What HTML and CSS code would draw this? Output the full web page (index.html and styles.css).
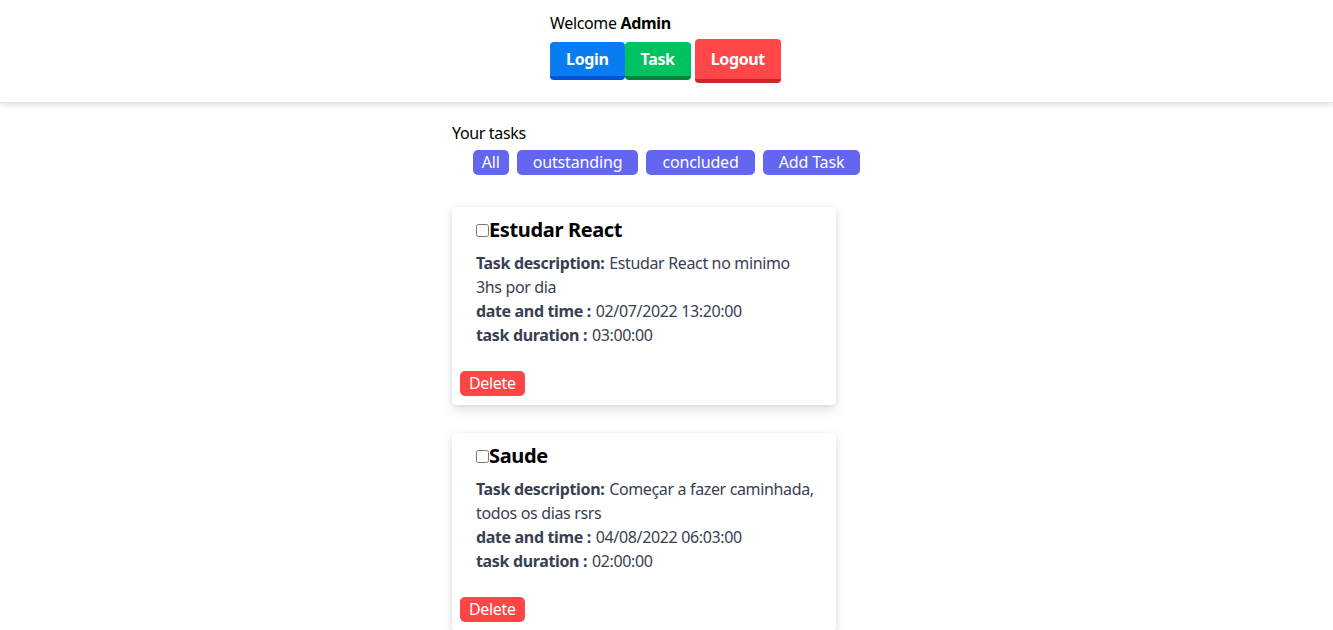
FILE: index.html
```html
<!DOCTYPE html>
<html>
<head>
<meta charset="utf-8">
<link rel="stylesheet" href="styles.css">
</head>
<body>
<header class="topbar">
  <div class="topbar-inner">
    <p class="welcome">Welcome <b>Admin</b></p>
    <nav class="nav">
      <button class="nav-btn nav-login">Login</button>
      <button class="nav-btn nav-task">Task</button>
      <button class="nav-btn nav-logout">Logout</button>
    </nav>
  </div>
</header>
<main class="tasks">
  <p class="tasks-title">Your tasks</p>
  <div class="filters">
    <button class="filter filter-all">All</button>
    <button class="filter">outstanding</button>
    <button class="filter">concluded</button>
    <button class="filter">Add Task</button>
  </div>
  <section class="card">
    <div class="card-body">
      <h2 class="card-title"><input type="checkbox" class="check">Estudar React</h2>
      <p class="line"><b>Task description:</b> Estudar React no minimo 3hs por dia</p>
      <p class="line"><b>date and time :</b> 02/07/2022 13:20:00</p>
      <p class="line"><b>task duration :</b> 03:00:00</p>
    </div>
    <div class="card-foot"><button class="delete">Delete</button></div>
  </section>
  <section class="card">
    <div class="card-body">
      <h2 class="card-title"><input type="checkbox" class="check">Saude</h2>
      <p class="line"><b>Task description:</b> Começar a fazer caminhada, todos os dias rsrs</p>
      <p class="line"><b>date and time :</b> 04/08/2022 06:03:00</p>
      <p class="line"><b>task duration :</b> 02:00:00</p>
    </div>
    <div class="card-foot"><button class="delete">Delete</button></div>
  </section>
</main>
</body>
</html>
```
FILE: styles.css
```css
* { box-sizing: border-box; }
html, body { margin: 0; padding: 0; }
body {
  font-family: "Noto Sans", "Open Sans", sans-serif;
  font-size: 16px;
  line-height: 24px;
  letter-spacing: -0.35px;
  color: #000;
  background: #fff;
}
p, h2 { margin: 0; }
button { font-family: inherit; letter-spacing: inherit; cursor: pointer; }

.topbar {
  height: 103px;
  display: flex;
  justify-content: center;
  box-shadow: 0 2px 6px rgba(0,0,0,0.12);
  border-bottom: 1px solid #e6e6e6;
}
.topbar-inner { padding-top: 11px; padding-right: 2px; }
.welcome { line-height: 24px; }
.nav { display: flex; align-items: center; margin-top: 4px; }
.nav-btn {
  border: none;
  color: #fff;
  font-weight: 700;
  font-size: 16px;
  line-height: 24px;
  border-radius: 4px;
  padding: 5px 16px;
  border-bottom: 4px solid;
}
.nav-login { background: #0a7cf2; border-bottom-color: #0052d6; }
.nav-task { background: #00c261; border-bottom-color: #00843e; }
.nav-logout {
  background: #ff474a;
  border-bottom-color: #c8282a;
  padding: 8px 16px;
  margin-left: 4px;
}

.tasks {
  width: 429px;
  margin: 0 auto;
  padding-top: 18px;
}
.tasks-title { color: #000; }
.filters {
  display: flex;
  justify-content: center;
  gap: 8px;
  margin-top: 5px;
}
.filter {
  background: #6366f1;
  color: #fff;
  border: none;
  border-radius: 5px;
  font-size: 16px;
  line-height: 25px;
  letter-spacing: -0.15px;
  padding: 0 16px;
}
.filter-all { padding: 0 9px; }

.card {
  width: 384px;
  margin-top: 32px;
  background: #fff;
  border-radius: 4px;
  box-shadow: 0 4px 12px rgba(0,0,0,0.12), 0 1px 4px rgba(0,0,0,0.06);
}
.card + .card { margin-top: 28px; }
.card-body { padding: 9px 20px 16px 24px; }
.card-title {
  font-size: 20px;
  line-height: 28px;
  font-weight: 700;
  color: #000;
  display: flex;
  align-items: center;
  margin-bottom: 7px;
}
.check { width: 13px; height: 13px; margin: 0; }
.line { color: #374151; }
.line b { font-weight: 700; padding-right: 1px; }
.card-foot { padding: 8px 8px 9px; }
.delete {
  background: #ff4545;
  color: #fff;
  border: none;
  border-radius: 5px;
  font-size: 16px;
  line-height: 25px;
  padding: 0 9px;
}
```
